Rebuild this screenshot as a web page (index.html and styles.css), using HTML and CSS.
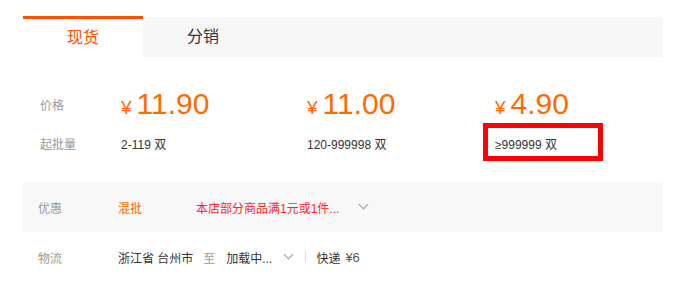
FILE: index.html
```html
<!DOCTYPE html>
<html lang="zh-CN">
<head>
    <meta charset="UTF-8">
    <title>商品详情</title>
    <link rel="stylesheet" href="styles.css">
</head>
<body>
    <!-- 页面内容 begin -->
    <div class="detail">
        <div class="tabs">
            <div class="tab tab-active">现货</div>
            <div class="tab">分销</div>
        </div>

        <div class="price-box">
            <div class="price-row">
                <div class="p-label">价格</div>
                <div class="p-col"><span class="yen">¥</span><span class="num">11.90</span></div>
                <div class="p-col p-mid"><span class="yen">¥</span><span class="num">11.00</span></div>
                <div class="p-col p-last"><span class="yen">¥</span><span class="num">4.90</span></div>
            </div>
            <div class="amount-row">
                <div class="p-label">起批量</div>
                <div class="p-col">2-119 双</div>
                <div class="p-col p-mid">120-999998 双</div>
                <div class="p-col p-last mark">≥999999 双<span class="mark-box"></span></div>
            </div>
        </div>

        <div class="info-row info-gray">
            <div class="i-label">优惠</div>
            <div class="mix">混批</div>
            <div class="promo">本店部分商品满1元或1件...</div>
            <span class="arrow"></span>
        </div>

        <div class="info-row">
            <div class="i-label">物流</div>
            <div class="ship">浙江省 台州市</div>
            <div class="to">至</div>
            <div class="ship">加载中...</div>
            <span class="arrow arrow-small"></span>
            <span class="sep"></span>
            <div class="ship">快递</div>
            <div class="fee">¥6</div>
        </div>
    </div>
    <!-- 页面内容到此结束 -->
</body>
</html>
```

FILE: styles.css
```css
body{
    margin: 0;
    font-family: "Liberation Sans", "Noto Sans CJK SC", sans-serif;
    font-size: 12px;
    color: #333;
    background: #fff;
}

.detail{
    width: 640px;
    margin-left: 23px;
}

/* 标签 */
.tabs{
    display: flex;
    margin-top: 16px;
    border-top: 1px solid #fff;
    background-color: #f7f7f7;
    height: 40px;
}

.tab{
    width: 120px;
    line-height: 40px;
    text-align: center;
    font-size: 16px;
    color: #333;
}

.tab-active{
    margin-top: -1px;
    border-top: 3px solid #ff5000;
    line-height: 38px;
    background-color: #fff;
    color: #ff5000;
}

/* 价格 */
.price-box{
    padding: 27px 0 27px 17px;
}

.price-row,
.amount-row{
    display: flex;
    align-items: center;
}

.price-row{
    height: 40px;
}

.amount-row{
    margin-top: 7px;
    height: 24px;
}

.p-label{
    flex-shrink: 0;
    width: 81px;
    color: #999;
    font-size: 12px;
}

.p-col{
    flex-shrink: 0;
    width: 186px;
    white-space: nowrap;
}

.p-mid{
    width: 188px;
}

.p-last{
    width: 140px;
}

.yen{
    color: #ff6a00;
    font-size: 19px;
    margin-right: 5px;
}

.num{
    color: #ff6a00;
    font-size: 30px;
    line-height: 40px;
}

.mark{
    position: relative;
}

.mark-box{
    position: absolute;
    left: -12px;
    top: -12px;
    width: 110px;
    height: 28px;
    border: 5px solid #f00;
}

/* 优惠、物流 */
.info-row{
    display: flex;
    align-items: center;
    height: 50px;
    padding-left: 15px;
}

.info-gray{
    background-color: #f8f8f8;
}

.i-label{
    width: 80px;
    color: #999;
}

.mix{
    width: 78px;
    color: #ff6a00;
}

.promo{
    color: #f22;
}

.arrow{
    width: 6px;
    height: 6px;
    margin: -5px 0 0 21px;
    border-right: 1px solid #999;
    border-bottom: 1px solid #999;
    transform: rotate(45deg);
}

.arrow-small{
    margin-left: 13px;
}

.to{
    color: #999;
    margin: 0 11px 0 10px;
}

.sep{
    width: 1px;
    height: 12px;
    margin: 0 10px 0 13px;
    background-color: #ddd;
}

.fee{
    margin-left: 5px;
    font-size: 13px;
    color: #555;
}
```
